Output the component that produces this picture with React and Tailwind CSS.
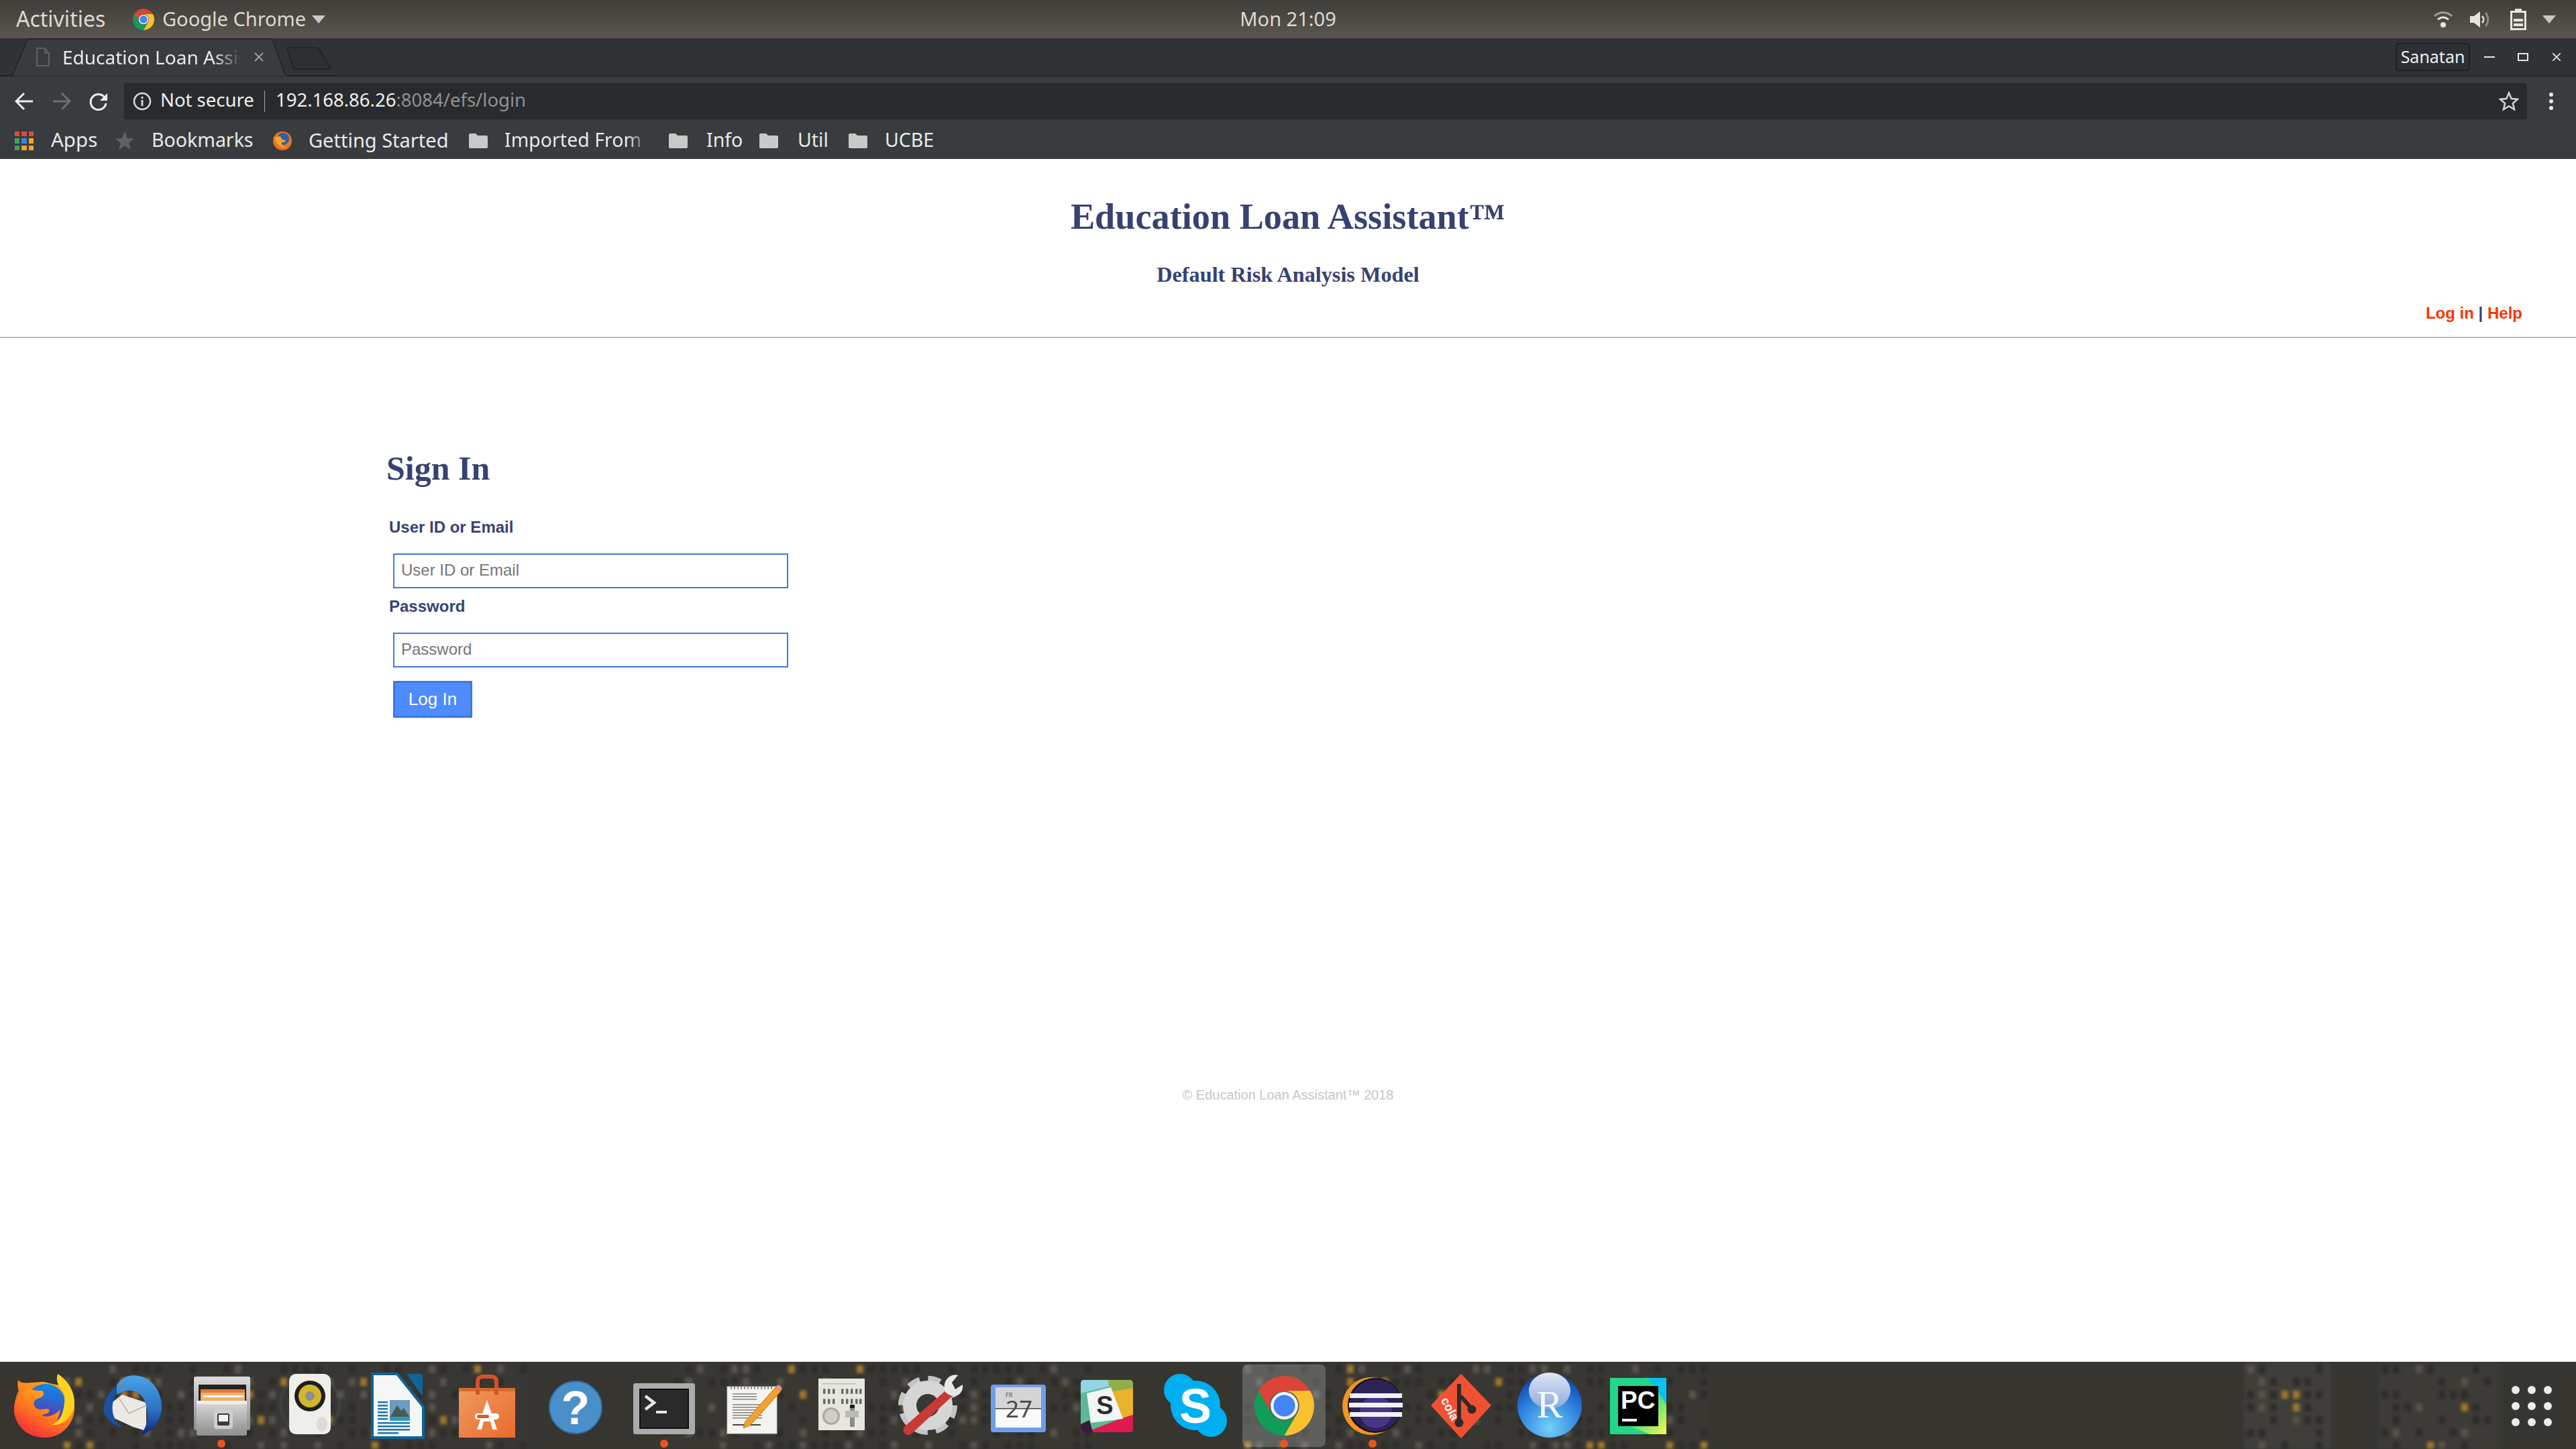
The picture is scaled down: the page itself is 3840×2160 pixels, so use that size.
import React from "react";

const ui = "font-['Noto_Sans','DejaVu_Sans',sans-serif]";

function Chrome({ className }) {
  return (
    <svg viewBox="0 0 100 100" className={className}>
      <path d="M50 0C32 0 15.5 10 6.7 25L28.3 62.5A25 25 0 0 1 50 25H93.3C84.5 10 68 0 50 0Z" fill="#db4437" />
      <path d="M6.7 25A50 50 0 0 0 50 100L71.65 62.5A25 25 0 0 1 28.35 62.5Z" fill="#0f9d58" />
      <path d="M93.3 25H50A25 25 0 0 1 71.65 62.5L50 100A50 50 0 0 0 93.3 25Z" fill="#fbc02d" />
      <circle cx="50" cy="50" r="23" fill="#f1f1f1" />
      <circle cx="50" cy="50" r="18" fill="#4285f4" />
    </svg>
  );
}

function Folder() {
  return (
    <svg viewBox="0 0 28 28" className="w-[28px] h-[28px] shrink-0">
      <path d="M0 5a2 2 0 0 1 2-2h8l3 3h13a2 2 0 0 1 2 2v15a2 2 0 0 1-2 2H2a2 2 0 0 1-2-2Z" fill="#c8c9c9" />
    </svg>
  );
}

function SmallFox() {
  return (
    <svg viewBox="0 0 30 30" className="w-[30px] h-[30px] shrink-0">
      <circle cx="15" cy="15" r="14" fill="#e8731c" />
      <circle cx="16" cy="12" r="9" fill="#2c5fa8" />
      <path d="M3 10c2 10 10 17 20 15-6 0-10-4-9-8 3 1 6-1 6-3-4 0-7-2-8-6-4 1-7 0-9 2Z" fill="#f5a623" />
    </svg>
  );
}

function Wallpaper() {
  let seed = 11;
  const rnd = () => {
    seed = (seed * 16807) % 2147483647;
    return seed / 2147483647;
  };
  const blocks = [
    [90, 700, "#393733", 0.07], [1000, 640, "#383732", 0.04], [1850, 700, "#383732", 0.06], [3345, 130, "#3f3e39", 0.06], [3545, 185, "#3c3b36", 0.05],
  ];
  const cells = [];
  blocks.forEach(([x, w, , amber], b) => {
    for (let yy = 5; yy < 130; yy += 19) {
      for (let xx = x + 5; xx < x + w - 10; xx += 17) {
        const r = rnd();
        let fill = null;
        if (r > 1 - amber) fill = "#9c762e";
        else if (r > 0.8) fill = "#55524a";
        else if (r > 0.45) fill = "#2e2d29";
        if (fill) cells.push(<rect key={`${b}-${xx}-${yy}`} x={xx} y={yy} width="10" height="12" fill={fill} />);
      }
    }
  });
  return (
    <svg viewBox="0 0 3840 130" preserveAspectRatio="none" className="absolute inset-0 w-full h-full blur-[2px]">
      {blocks.map(([x, w, c]) => <rect key={x} x={x} y="-5" width={w} height="140" fill={c} />)}
      {cells}
    </svg>
  );
}

const I = {
  firefox: (
    <svg viewBox="0 0 120 120" className="w-[120px] h-[120px]">
      <defs>
        <linearGradient id="ff1" x1="0.8" y1="0" x2="0.2" y2="1"><stop offset="0" stopColor="#ffb21f" /><stop offset="0.5" stopColor="#ff7a1c" /><stop offset="1" stopColor="#f6283f" /></linearGradient>
        <linearGradient id="ff2" x1="0.6" y1="0" x2="0.4" y2="1"><stop offset="0" stopColor="#0a8cea" /><stop offset="1" stopColor="#6a2a9c" /></linearGradient>
      </defs>
      <path d="M60 25C40 25 26 30 21 22c-1 6-1 12 1 16-5 10-7 20-7 28 2 28 22 42 46 42 26 0 44-22 44-44 0-12-4-22-10-32L72 28Z" fill="url(#ff1)" />
      <circle cx="62" cy="58" r="30" fill="url(#ff2)" />
      <path d="M15 66c0-10 10-24 22-32 4 4 14 4 20 4 4 4 2 8-2 10-4 2-8 2-10 6-2 6 2 12 10 12 6 0 8-2 12 0 2 4-2 6-6 7-5 1-4 2-2 3 6 2 18-2 25-10-3 24-22 40-41 36C28 100 15 84 15 66Z" fill="url(#ff1)" />
      <path d="M80 13c-3 10 0 16 6 24 6 8 5 22 1 34-3 10-10 16-16 18 18 2 34-14 34-34 0-18-12-34-25-42Z" fill="#ffd21f" />
    </svg>
  ),
  thunderbird: (
    <svg viewBox="0 0 120 120" className="w-[120px] h-[120px]">
      <defs>
        <linearGradient id="tb" x1="0.5" y1="0" x2="0.5" y2="1"><stop offset="0" stopColor="#4aa3e6" /><stop offset="0.6" stopColor="#2a6fc4" /><stop offset="1" stopColor="#13207f" /></linearGradient>
      </defs>
      <path d="M26 58 44 44 80 56V98L60 92 30 78Z" fill="#ebe9e3" />
      <path d="M40 50 54 72 80 60" fill="none" stroke="#8f8c85" strokeWidth="1" />
      <path d="M36 30C22 42 14 58 17 72 24 84 34 92 44 92 32 84 28 70 30 58 31 50 34 44 38 40Z" fill="#1b4fa0" />
      <path d="M36 30C44 16 60 12 76 18 94 26 103 44 103 62 103 80 92 96 74 104 72 104 72 102 74 100 84 88 84 66 76 50 68 36 52 34 36 44Z" fill="url(#tb)" />
      <circle cx="44" cy="29" r="2" fill="#e0622a" />
    </svg>
  ),
  files: (
    <svg viewBox="0 0 120 120" className="w-[120px] h-[120px]">
      <defs>
        <linearGradient id="fc" x1="0" y1="0" x2="0" y2="1"><stop offset="0" stopColor="#dcdcdc" /><stop offset="1" stopColor="#8d8d8d" /></linearGradient>
      </defs>
      <rect x="19" y="17" width="84" height="80" rx="3" fill="url(#fc)" />
      <rect x="26" y="29" width="71" height="30" fill="#222" />
      <rect x="29" y="36" width="66" height="24" fill="#e07b3b" />
      <rect x="29" y="41" width="66" height="16" fill="#f0b16a" />
      <rect x="33" y="45" width="60" height="3" fill="#fff" />
      <rect x="23" y="53" width="75" height="52" rx="2" fill="url(#fc)" />
      <rect x="23" y="53" width="75" height="5" fill="#eee" />
      <rect x="49" y="67" width="28" height="28" rx="4" fill="#cfcfcf" />
      <rect x="54" y="72" width="18" height="18" rx="2" fill="#3a3a3a" />
      <rect x="56" y="74" width="14" height="10" fill="#f2f2f2" />
    </svg>
  ),
  speaker: (
    <svg viewBox="0 0 120 120" className="w-[120px] h-[120px]">
      <circle cx="60" cy="58" r="44" fill="none" stroke="#4a5660" strokeWidth="5" opacity="0.3" />
      <rect x="29" y="13" width="62" height="90" rx="10" fill="#efeee9" />
      <circle cx="60" cy="46" r="23" fill="#1f1f1f" />
      <circle cx="60" cy="46" r="17" fill="#d2b62a" />
      <circle cx="60" cy="46" r="7" fill="#8e8e8e" />
      <ellipse cx="78" cy="88" rx="8" ry="11" fill="#dcdbd5" />
    </svg>
  ),
  writer: (
    <svg viewBox="0 0 120 120" className="w-[120px] h-[120px]">
      <path d="M21 13H58L97 62V108H21Z" fill="#f5f6f6" stroke="#0e6496" strokeWidth="4" />
      <path d="M72 13h20a4 4 0 0 1 4 4v30Z" fill="#0e6496" />
      <rect x="47" y="52" width="30" height="31" fill="#6c9bc2" />
      <path d="M47 78 58 60l6 8 4-4 9 14v5H47Z" fill="#4a5a55" />
      <rect x="47" y="77" width="30" height="6" fill="#2d9ac0" />
      {[54, 59, 64, 69, 74, 79].map((y) => <rect key={y} x="29" y={y} width="15" height="2.5" fill="#1d77ad" />)}
      {[85, 90, 95, 100].map((y) => <rect key={y} x="29" y={y} width={y === 100 ? 31 : 48} height="2.5" fill="#1d77ad" />)}
    </svg>
  ),
  store: (
    <svg viewBox="0 0 120 120" className="w-[120px] h-[120px]">
      <defs>
        <linearGradient id="st" x1="0" y1="0" x2="1" y2="1"><stop offset="0" stopColor="#f09b5e" /><stop offset="1" stopColor="#e96a2e" /></linearGradient>
      </defs>
      <path d="M46 44V24c0-5 4-7 8-7h12c4 0 8 2 8 7v20" fill="none" stroke="#d4522a" strokeWidth="6" />
      <rect x="18" y="34" width="84" height="74" fill="url(#st)" />
      <rect x="18" y="34" width="84" height="5" fill="#d8692f" />
      <path d="M46 44V36M74 44V36" stroke="#d4522a" strokeWidth="6" />
      <path d="M60 52 75 96h-7l-3-12H55l-3 12h-7Z" fill="#fff" />
      <rect x="42" y="72" width="36" height="9" rx="4.5" fill="#fff" />
      <rect x="45" y="74" width="18" height="5" rx="2" fill="#e2592a" />
    </svg>
  ),
  help: (
    <svg viewBox="0 0 120 120" className="w-[120px] h-[120px]">
      <circle cx="60" cy="63" r="39" fill="#4b8fc9" stroke="#2e6ea8" strokeWidth="2" />
      <text x="60" y="88" textAnchor="middle" fontFamily="'Liberation Sans',sans-serif" fontWeight="700" fontSize="70" fill="#fff">?</text>
    </svg>
  ),
  terminal: (
    <svg viewBox="0 0 120 120" className="w-[120px] h-[120px]">
      <rect x="14" y="27" width="92" height="76" rx="3" fill="#ababab" />
      <rect x="23" y="35" width="74" height="60" fill="#111" />
      <rect x="25" y="37" width="70" height="56" fill="#2a2a2a" />
      <path d="M32 46l13 10-13 10" fill="none" stroke="#e8e8e8" strokeWidth="4.5" />
      <rect x="48" y="68" width="16" height="4" fill="#e8e8e8" />
    </svg>
  ),
  gedit: (
    <svg viewBox="0 0 120 120" className="w-[120px] h-[120px]">
      <rect x="22" y="32" width="74" height="70" fill="#f4f3ee" stroke="#ccc" />
      <g stroke="#555" strokeWidth="1.2">{[28, 33, 38, 43, 48, 53, 58, 63, 68, 73, 78, 83, 88].map((x) => <line key={x} x1={x} y1="27" x2={x} y2="36" />)}</g>
      <g fill="#8a8a84">{[42, 46, 50, 58, 62, 66, 70, 74, 78].map((y) => <rect key={y} x="30" y={y} width={y > 56 ? 44 : 36} height="1.6" />)}</g>
      <rect x="30" y="88" width="42" height="2" fill="#444" />
      <path d="M94 33 102 39 56 90 46 94 49 84Z" fill="#f0a22e" stroke="#b87820" strokeWidth="1" />
      <path d="M94 33l3-3c2-1 4 0 6 3l1 3-3 3Z" fill="#e88a8a" />
    </svg>
  ),
  mixer: (
    <svg viewBox="0 0 120 120" className="w-[120px] h-[120px]">
      <rect x="26" y="20" width="69" height="77" fill="#e7e6df" />
      <rect x="32" y="27" width="50" height="1.5" fill="#bbb" />
      <g fill="#6b6b66">
        {[33, 40, 47, 60, 67, 74, 81, 87].map((x) => <React.Fragment key={x}><rect x={x} y="35" width="3.5" height="8" rx="1.5" /><rect x={x} y="50" width="3.5" height="8" rx="1.5" /></React.Fragment>)}
      </g>
      <circle cx="45" cy="76" r="13" fill="#aaa9a1" />
      <circle cx="45" cy="76" r="10" fill="#cfcec6" />
      <rect x="73" y="63" width="7" height="29" fill="#8b8b85" />
      <rect x="66" y="68" width="20" height="10" fill="#bdbcb4" />
      <rect x="73" y="59" width="7" height="5" fill="#1d1d1d" />
    </svg>
  ),
  tools: (
    <svg viewBox="0 0 120 120" className="w-[120px] h-[120px]">
      <circle cx="57" cy="60" r="36" fill="none" stroke="#c4c4c4" strokeWidth="16" strokeDasharray="17 11.300" />
      <circle cx="57" cy="60" r="26" fill="none" stroke="#d6d6d6" strokeWidth="22" />
      <circle cx="57" cy="60" r="17" fill="#3a3832" />
      <path d="M88 34 23 91a7 7 0 0 0 10 11L96 44Z" fill="#c93a34" />
      <path d="M83 40C78 26 88 12 102 15l-9 11 5 10 11-7c2 14-12 24-26 11Z" fill="#e8e8e8" />
    </svg>
  ),
  calendar: (
    <svg viewBox="0 0 120 120" className="w-[120px] h-[120px]">
      <rect x="19" y="29" width="82" height="71" rx="4" fill="#6f9ee8" />
      <rect x="26" y="33" width="68" height="60" fill="#fafafa" />
      <rect x="26" y="33" width="68" height="31" fill="#d5d5d5" />
      <rect x="26" y="64" width="68" height="1.5" fill="#444" />
      <text x="41" y="48" fontFamily="'Noto Sans',sans-serif" fontSize="9" fill="#555">FR</text>
      <text x="41" y="78" fontFamily="'Noto Sans',sans-serif" fontSize="35" fill="#4a4a4a">27</text>
    </svg>
  ),
  slack: (
    <svg viewBox="0 0 120 120" className="w-[120px] h-[120px]">
      <rect x="21" y="22" width="78" height="78" rx="5" fill="#5cb998" />
      <path d="M26 22h36l3 9-44 11V27a5 5 0 0 1 5-5Z" fill="#93d5e0" />
      <path d="M62 22h32a5 5 0 0 1 5 5v7L65 43Z" fill="#91b04a" />
      <path d="M66 40 99 34v40L80 80Z" fill="#eab32c" />
      <path d="M28 100 80 80l19-6v21a5 5 0 0 1-5 5Z" fill="#df1a50" />
      <path d="M21 88l13-6 5 18H26a5 5 0 0 1-5-5Z" fill="#3a1a3c" />
      <path d="M30 42 66 33 84 80 36 86Z" fill="#f2f5f6" />
      <text x="57" y="73" textAnchor="middle" fontFamily="'Liberation Sans',sans-serif" fontWeight="700" fontSize="38" fill="#2a2b30">S</text>
    </svg>
  ),
  skype: (
    <svg viewBox="0 0 120 120" className="w-[120px] h-[120px]">
      <circle cx="60" cy="60" r="37" fill="#00aff0" />
      <circle cx="37" cy="37" r="24" fill="#00aff0" />
      <circle cx="83" cy="83" r="24" fill="#00aff0" />
      <text x="60" y="86" textAnchor="middle" fontFamily="'Liberation Sans',sans-serif" fontWeight="700" fontSize="72" fill="#fff">S</text>
    </svg>
  ),
  eclipse: (
    <svg viewBox="0 0 120 120" className="w-[120px] h-[120px]">
      <circle cx="58" cy="61" r="43" fill="#f7941e" />
      <circle cx="64" cy="60" r="41" fill="#111" />
      <circle cx="65" cy="60" r="39" fill="#2c2255" />
      <circle cx="65" cy="70" r="24" fill="#463685" />
      <rect x="26" y="42" width="78" height="7" fill="#f1f0f4" />
      <rect x="25" y="56" width="80" height="7" fill="#f1f0f4" />
      <rect x="26" y="70" width="78" height="7" fill="#f1f0f4" />
    </svg>
  ),
  cola: (
    <svg viewBox="0 0 120 120" className="w-[120px] h-[120px]">
      <path d="M60 15 103 60 60 107 17 60Z" fill="#f05133" stroke="#f05133" strokeWidth="3" strokeLinejoin="round" />
      <path d="M57 28V84M59 46l17 19" stroke="#332a28" strokeWidth="6" fill="none" />
      <circle cx="57" cy="86" r="6.5" fill="#332a28" />
      <circle cx="76" cy="66" r="6.5" fill="#332a28" />
      <text x="38" y="68" transform="rotate(62 38 68)" fontFamily="'Liberation Sans',sans-serif" fontWeight="700" fontSize="18" fill="#fff" textAnchor="middle">cola</text>
    </svg>
  ),
  r: (
    <svg viewBox="0 0 120 120" className="w-[120px] h-[120px]">
      <defs>
        <radialGradient id="rg" cx="0.5" cy="0.85" r="0.85"><stop offset="0" stopColor="#74d0f8" /><stop offset="0.6" stopColor="#2a7fdc" /><stop offset="1" stopColor="#0d3fa8" /></radialGradient>
        <linearGradient id="rh" x1="0" y1="0" x2="0" y2="1"><stop offset="0" stopColor="#dfe6f5" /><stop offset="1" stopColor="#8fa8dc" /></linearGradient>
      </defs>
      <circle cx="60" cy="60" r="48" fill="url(#rg)" />
      <ellipse cx="60" cy="38" rx="31" ry="27" fill="url(#rh)" />
      <text x="60" y="78" textAnchor="middle" fontFamily="'Liberation Serif',serif" fontSize="58" fill="#f4f8fc">R</text>
    </svg>
  ),
  pycharm: (
    <svg viewBox="0 0 120 120" className="w-[120px] h-[120px]">
      <defs>
        <linearGradient id="pc" x1="0" y1="0" x2="1" y2="1"><stop offset="0" stopColor="#21d789" /><stop offset="0.5" stopColor="#21d789" /><stop offset="1" stopColor="#fcf84a" /></linearGradient>
      </defs>
      <rect x="18" y="19" width="84" height="84" fill="url(#pc)" />
      <path d="M74 19h28v40L84 30Z" fill="#07c3f2" />
      <path d="M18 80v23h60Z" fill="#21d789" />
      <rect x="30" y="31" width="60" height="60" fill="#000" />
      <text x="34" y="65" fontFamily="'Liberation Sans',sans-serif" fontWeight="700" fontSize="37" fill="#fff">PC</text>
      <rect x="36" y="80" width="22" height="4" fill="#fff" />
    </svg>
  ),
};

const dock = [
  ["firefox"], ["thunderbird"], ["files", 1], ["speaker"], ["writer"], ["store"], ["help"], ["terminal", 1], ["gedit"], ["mixer"],
  ["tools"], ["calendar"], ["slack"], ["skype"], ["chrome", 1, 1], ["eclipse", 1], ["cola"], ["r"], ["pycharm"],
];

function Field({ label, type, className }) {
  return (
    <>
      <label className={`ml-[4px] text-[24px] leading-[28px] font-bold text-[#374272] ${className}`}>{label}</label>
      <input
        type={type}
        placeholder={label}
        className="ml-[10px] mt-[25px] w-[589px] h-[52px] px-[10px] pb-[2px] text-[24px] bg-white border-2 border-[#3b78e7] outline-none placeholder:text-[#757575] placeholder:opacity-100"
      />
    </>
  );
}

export default function App() {
  return (
    <div className="w-[3840px] h-[2160px] flex flex-col overflow-hidden bg-white">
      {/* GNOME top bar */}
      <div className={`h-[57px] shrink-0 flex items-center bg-gradient-to-b from-[#3f3d38] to-[#5a574f] text-[#dcdad4] text-[29px] ${ui}`}>
        <div className="flex-1 flex items-center">
          <span className="ml-[24px] w-[174px] pb-[2px] text-[32px]">Activities</span>
          <Chrome className="w-[32px] h-[32px]" />
          <span className="ml-[12px] pb-[2px]">Google Chrome</span>
          <svg viewBox="0 0 20 12" className="ml-[9px] w-[20px] h-[12px]"><path d="M0 0h20L10 12Z" fill="#c9c7c1" /></svg>
        </div>
        <span className="shrink-0 pb-[2px]">Mon 21:09</span>
        <div className="flex-1 flex items-center justify-end">
          <svg viewBox="0 0 28 28" className="w-[28px] h-[28px]">
            <path d="M1 9C8 2 20 2 27 9" fill="none" stroke="#a09e98" strokeWidth="3" />
            <path d="M6 14c5-4 11-4 16 0" fill="none" stroke="#e5e4e0" strokeWidth="3" />
            <circle cx="14" cy="22" r="4" fill="#e5e4e0" />
          </svg>
          <svg viewBox="0 0 30 28" className="ml-[26px] w-[30px] h-[28px]">
            <path d="M0 9h6l9-7v24l-9-7H0Z" fill="#e5e4e0" />
            <path d="M18 9c3 3 3 7 0 10" fill="none" stroke="#e5e4e0" strokeWidth="2.5" />
            <path d="M23 4c5 6 5 14 0 20" fill="none" stroke="#8d8b85" strokeWidth="3" />
          </svg>
          <svg viewBox="0 0 24 32" className="ml-[30px] w-[24px] h-[32px]">
            <path d="M7 0h10v3h7v29H0V3h7Z" fill="#e5e4e0" />
            <rect x="3" y="6" width="18" height="23" fill="#56534c" />
            <rect x="5" y="15" width="14" height="4" fill="#e5e4e0" />
            <rect x="5" y="22" width="14" height="4" fill="#e5e4e0" />
          </svg>
          <svg viewBox="0 0 20 12" className="ml-[24px] mr-[30px] w-[20px] h-[12px]"><path d="M0 0h20L10 12Z" fill="#c9c7c1" /></svg>
        </div>
      </div>

      {/* tab strip */}
      <div className={`relative h-[57px] shrink-0 flex items-center bg-[#2f3336] border-b-2 border-[#222527] ${ui}`}>
        <svg viewBox="0 0 500 57" className="absolute left-0 top-0 w-[500px] h-[57px]">
          <path d="M0 56H14Q19 56 20 52L40 4Q42 1 46 1H402Q406 1 407 4L424 52Q426 56 431 56H500V57H0Z" fill="#383c3f" stroke="#1f2224" strokeWidth="1.5" />
          <path d="M428 16Q427 14 430 14H472Q475 14 476 17L492 42Q493 46 489 46H441Q438 46 437 43Z" fill="#2c3033" stroke="#1f2224" strokeWidth="1.5" />
        </svg>
        <svg viewBox="0 0 20 28" className="relative ml-[54px] w-[20px] h-[28px]">
          <path d="M1 1h12l6 7v19H1Z" fill="none" stroke="#5d6163" strokeWidth="2" />
          <path d="M13 1v7h6" fill="none" stroke="#5d6163" strokeWidth="2" />
        </svg>
        <span className="relative ml-[19px] w-[267px] overflow-hidden whitespace-nowrap text-[28px] text-[#e8e9e9] [mask-image:linear-gradient(to_right,black_85%,transparent)]">Education Loan Assistant</span>
        <svg viewBox="0 0 14 14" className="relative ml-[19px] w-[14px] h-[14px]"><path d="M1 1l12 12M13 1L1 13" stroke="#9d9f9f" strokeWidth="2" /></svg>
        <div className="ml-auto mr-[23px] flex items-center relative">
          <div className="w-[111px] h-[42px] rounded-[5px] bg-[#2d3033] border-2 border-[#1d1f21] flex items-center justify-center text-[25px] text-[#eeeeee]">Sanatan</div>
          <div className="ml-[21px] w-[16px] h-[2px] bg-[#e8e8e8]" />
          <div className="ml-[34px] w-[16px] h-[12px] border-2 border-[#e8e8e8]" />
          <svg viewBox="0 0 12 12" className="ml-[36px] w-[12px] h-[12px]"><path d="M0 0l12 12M12 0L0 12" stroke="#e8e8e8" strokeWidth="1.6" /></svg>
        </div>
      </div>

      {/* toolbar */}
      <div className={`h-[74px] shrink-0 flex items-center bg-[#383c3f] ${ui}`}>
        <svg viewBox="0 0 28 28" className="ml-[22px] w-[28px] h-[28px]"><path d="M27 14H3M14 2 2 14l12 12" fill="none" stroke="#eceded" strokeWidth="3" /></svg>
        <svg viewBox="0 0 28 28" className="ml-[28px] w-[28px] h-[28px]"><path d="M1 14h24M14 2l12 12-12 12" fill="none" stroke="#6c6f71" strokeWidth="3" /></svg>
        <svg viewBox="0 0 28 28" className="ml-[27px] w-[28px] h-[28px]">
          <path d="M24 10A11.5 11.5 0 1 0 25 17" fill="none" stroke="#eceded" strokeWidth="3" />
          <path d="M27 2v11H16Z" fill="#eceded" />
        </svg>
        <div className="ml-[24px] w-[3582px] h-[54px] bg-[#282b2d] rounded-[3px] border border-[#24272a] flex items-center text-[27.500px]">
          <svg viewBox="0 0 28 28" className="ml-[12px] w-[28px] h-[28px]">
            <circle cx="14" cy="14" r="12" fill="none" stroke="#d9dada" strokeWidth="2.5" />
            <rect x="12.6" y="12" width="2.8" height="9" fill="#d9dada" />
            <rect x="12.6" y="7" width="2.8" height="3" fill="#d9dada" />
          </svg>
          <span className="ml-[13px] w-[136px] pb-[4px] whitespace-nowrap text-[#f0f0f0]">Not secure</span>
          <div className="ml-[19px] w-px h-[32px] bg-[#a7a8a9]" />
          <span className="ml-[16px] pb-[4px] text-[#f0f0f0]">192.168.86.26<span className="text-[#8f9294]">:8084/efs/login</span></span>
          <svg viewBox="0 0 30 30" className="ml-auto mr-[11px] w-[30px] h-[30px]"><path d="M15 2.5l3.6 8.6 9.4.8-7.1 6.1 2.1 9.2L15 22.3 7 27.2l2.1-9.2L2 11.9l9.4-.8Z" fill="none" stroke="#d3d3d3" strokeWidth="2.5" /></svg>
        </div>
        <div className="ml-[33px] flex flex-col gap-[4px]">
          <div className="w-[6px] h-[6px] rounded-full bg-[#e8e8e8]" />
          <div className="w-[6px] h-[6px] rounded-full bg-[#e8e8e8]" />
          <div className="w-[6px] h-[6px] rounded-full bg-[#e8e8e8]" />
        </div>
      </div>

      {/* bookmarks */}
      <div className={`h-[49px] pb-[5px] shrink-0 flex items-center bg-[#383c3f] text-[#e9eaea] text-[28.500px] ${ui}`}>
        <div className="ml-[22px] w-[28px] h-[28px] grid grid-cols-3 gap-[3px]">
          {["#e04a3a", "#e04a3a", "#e04a3a", "#3aa757", "#3b82e0", "#f4a623", "#3aa757", "#f4a623", "#f4a623"].map((c, i) => (
            <div key={i} style={{ background: c }} />
          ))}
        </div>
        <span className="ml-[26px] w-[68px] pb-[3px] text-[29.500px]">Apps</span>
        <svg viewBox="0 0 30 30" className="ml-[27px] w-[30px] h-[30px]"><path d="M15 1l4 10 10 .6-7.7 6.6 2.6 10L15 22.6 6.100 28.200l2.600-10L1 11.600 11 11Z" fill="#5f6264" /></svg>
        <span className="ml-[25px] w-[152px] pb-[3px] whitespace-nowrap">Bookmarks</span>
        <div className="ml-[28px]"><SmallFox /></div>
        <span className="ml-[24px] w-[212px] pb-[3px] whitespace-nowrap text-[29px]">Getting Started</span>
        <div className="ml-[27px]"><Folder /></div>
        <span className="ml-[25px] w-[215px] pb-[3px] overflow-hidden whitespace-nowrap [mask-image:linear-gradient(to_right,black_85%,transparent)]">Imported From Firefox</span>
        <div className="ml-[30px]"><Folder /></div>
        <span className="ml-[28px] w-[54px] pb-[3px]">Info</span>
        <div className="ml-[25px]"><Folder /></div>
        <span className="ml-[29px] w-[49px] pb-[3px]">Util</span>
        <div className="ml-[27px]"><Folder /></div>
        <span className="ml-[26px] pb-[3px]">UCBE</span>
      </div>

      {/* page */}
      <main className="flex-1 flex flex-col bg-white font-['Liberation_Sans',sans-serif]">
        <header className="h-[267px] shrink-0 flex flex-col items-center border-b-2 border-[#bdbdbd] pt-[56px] font-['Liberation_Serif',serif] font-bold text-[#374272]">
          <h1 className="text-[54.250px] leading-[60px]">Education Loan Assistant™</h1>
          <h2 className="mt-[36px] text-[32.250px] leading-[40px]">Default Risk Analysis Model</h2>
          <div className="mt-[24px] self-end mr-[80px] font-['Liberation_Sans',sans-serif] text-[24px] leading-[28px] font-bold text-[#ff3300]">
            Log in <span className="text-[#374272]">|</span> Help
          </div>
        </header>
        <section className="ml-[576px] mt-[164px] flex flex-col items-start">
          <h3 className="mb-[44px] font-['Liberation_Serif',serif] font-bold text-[50px] leading-[60px] text-[#374272]">Sign In</h3>
          <Field label="User ID or Email" type="text" />
          <Field label="Password" type="password" className="mt-[13px]" />
          <button className="ml-[10px] mt-[20px] w-[118px] h-[55px] bg-[#4d8bff] border-[3px] border-[#3b78e7] text-white text-[26px]">Log In</button>
        </section>
        <footer className="mt-[548px] text-center text-[20px] leading-[28px] text-[#c6c6c6]">© Education Loan Assistant™ 2018</footer>
      </main>

      {/* dock */}
      <div className="relative h-[130px] shrink-0 flex overflow-hidden bg-[#363530]">
        <Wallpaper />
        {dock.map(([n, dot, active]) => (
          <div key={n} className="relative w-[132px] h-[130px] flex items-center justify-center">
            {active ? <div className="absolute left-[4px] top-[4px] w-[124px] h-[123px] rounded-[8px] bg-white/20" /> : null}
            {n === "chrome" ? <Chrome className="relative w-[89px] h-[89px]" /> : <span className="relative">{I[n]}</span>}
            {dot ? <div className="absolute left-[60px] top-[116px] w-[12px] h-[12px] rounded-full bg-[#e95420]" /> : null}
          </div>
        ))}
        <div className="relative ml-auto mr-[36px] mt-[36px] h-[60px] grid grid-cols-3 gap-[12px]">
          {Array.from({ length: 9 }).map((_, i) => <div key={i} className="w-[12px] h-[12px] rounded-full bg-[#ececea]" />)}
        </div>
      </div>
    </div>
  );
}
